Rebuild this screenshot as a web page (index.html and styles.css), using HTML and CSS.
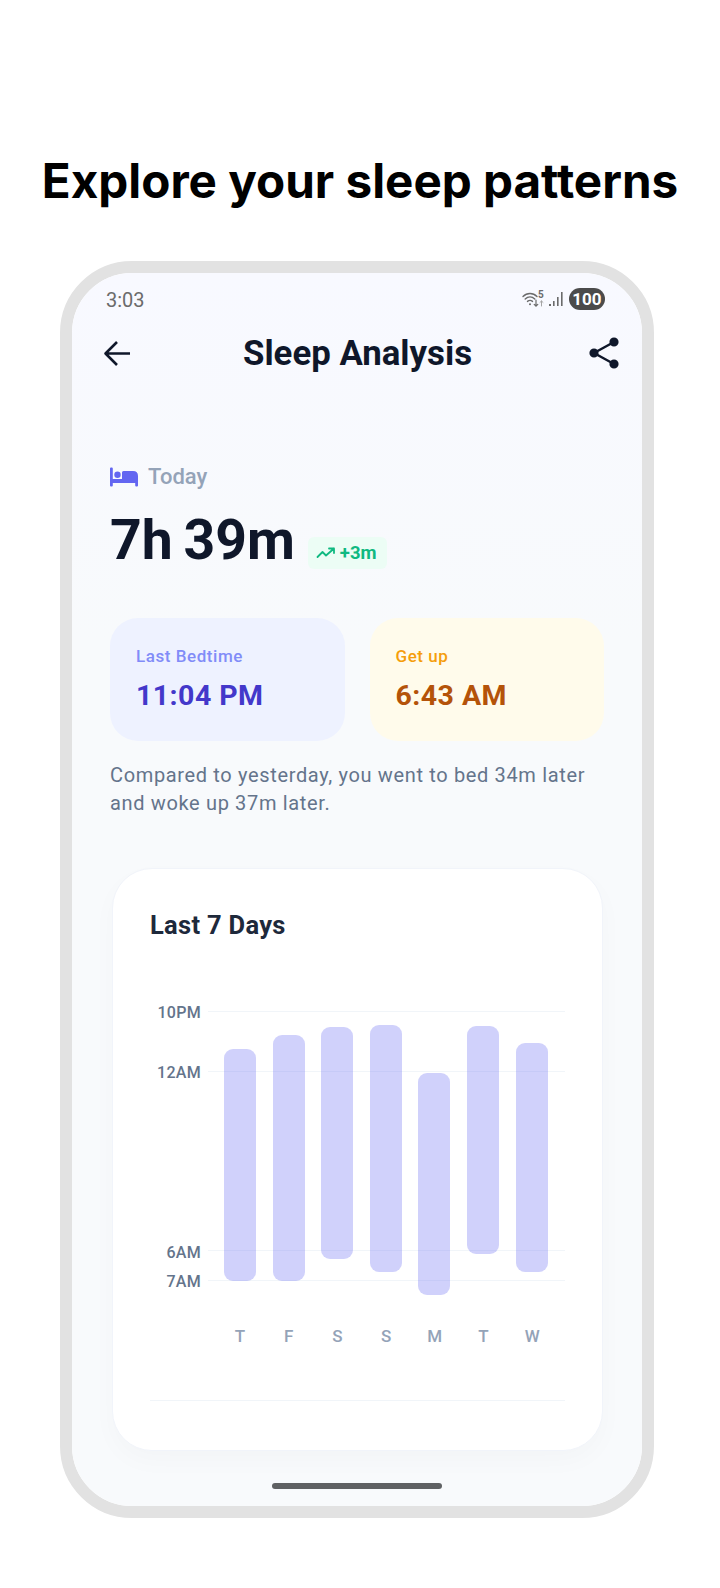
FILE: index.html
```html
<!DOCTYPE html>
<html>
<head>
<meta charset="UTF-8">
<title>Sleep Analysis</title>
<link rel="stylesheet" href="styles.css">
</head>
<body>
<h1 class="headline">Explore your sleep patterns</h1>
<div class="phone">
	<div class="screen">
		<div class="status">
			<span class="clock">3:03</span>
			<div class="status-icons">
				<svg width="24" height="18" viewBox="0 0 24 18" fill="none" stroke="#6b6b6b" stroke-width="1.4" stroke-linecap="round">
					<path d="M1 6.5C5 2.5 11 2.5 15 6.5"/>
					<path d="M3.2 9C6 6.4 10 6.4 12.8 9"/>
					<path d="M5.5 11.4C7 10.2 9 10.2 10.5 11.4"/>
					<path d="M8 14.2v.1" stroke-width="2"/>
					<path d="M14 10v6M12.2 14.4L14 16.2L15.8 14.4" stroke-width="1.2"/>
					<path d="M19.5 16v-5M18 12.4L19.5 11L21 12.4" stroke="#a5a5a5" stroke-width="1"/>
					<text x="16" y="8" class="wifi-five">5</text>
				</svg>
				<svg width="16" height="16" viewBox="0 0 16 16" fill="#6b6b6b">
					<rect x="0" y="13" width="2" height="2"/>
					<rect x="4" y="10" width="1.6" height="5"/>
					<rect x="8" y="6" width="1.6" height="9"/>
					<rect x="12" y="1" width="1.6" height="14"/>
				</svg>
				<span class="battery">100</span>
			</div>
		</div>
		<div class="nav">
			<svg width="32" height="32" viewBox="0 0 32 32" fill="none" stroke="#0f172a" stroke-width="2.6" stroke-linejoin="round">
				<path d="M29 16.500H5M16 5L4.500 16.500L16 28"/>
			</svg>
			<span class="nav-title">Sleep Analysis</span>
			<svg width="32" height="32" viewBox="0 0 32 32" fill="#0f172a" stroke="#0f172a" stroke-width="2.400">
				<path d="M25 5L5 16L25 27" fill="none"/>
				<circle cx="25" cy="5" r="3.400"/>
				<circle cx="5" cy="16" r="3.400"/>
				<circle cx="25" cy="27" r="3.400"/>
			</svg>
		</div>

		<div class="summary">
			<div class="today">
				<svg width="28" height="20" viewBox="0 0 28 20" fill="#6366f1">
					<path d="M0 1.500Q0 .500 1 .500H1.800Q2.800 .500 2.800 1.500V12H12V5.500Q12 4 13.500 4H23Q28 4 28 9V18.500Q28 19.500 27 19.500H26.200Q25.200 19.500 25.200 18.500V16H2.800V18.500Q2.800 19.500 1.800 19.500H1Q0 19.500 0 18.500Z"/>
					<circle cx="7.500" cy="7.800" r="3.200"/>
				</svg>
				<span>Today</span>
			</div>
			<div class="total">
				<span class="total-time">7h 39m</span>
				<span class="delta">
					<svg width="20" height="14" viewBox="0 0 20 14" fill="none" stroke="#10b981" stroke-width="1.800" stroke-linecap="round" stroke-linejoin="round">
						<path d="M1.500 11L6.500 6L10 9.500L18 2.500M13 2.500H18V7"/>
					</svg>
					+3m
				</span>
			</div>
		</div>

		<div class="times">
			<div class="time-card bed">
				<div class="time-label">Last Bedtime</div>
				<div class="time-value">11:04 PM</div>
			</div>
			<div class="time-card rise">
				<div class="time-label">Get up</div>
				<div class="time-value">6:43 AM</div>
			</div>
		</div>
		<p class="compare">Compared to yesterday, you went to bed 34m later and woke up 37m later.</p>

		<div class="chart-card">
			<h2 class="chart-title">Last 7 Days</h2>
			<div class="chart">
				<!-- chart canvas: top of .chart is y=960 in the page -->
				<div class="grid-line" style="top:51px"></div>
				<div class="grid-line" style="top:111px"></div>
				<div class="grid-line" style="top:290px"></div>
				<div class="grid-line" style="top:320px"></div>
				<span class="hour" style="top:44px">10PM</span>
				<span class="hour" style="top:104px">12AM</span>
				<span class="hour" style="top:284px">6AM</span>
				<span class="hour" style="top:313px">7AM</span>
				<div class="bar" style="left:74px;top:89px;height:232px"></div>
				<div class="bar" style="left:122.500px;top:75px;height:246px"></div>
				<div class="bar" style="left:171px;top:67px;height:232px"></div>
				<div class="bar" style="left:219.500px;top:64.500px;height:247.500px"></div>
				<div class="bar" style="left:268px;top:112.500px;height:222px"></div>
				<div class="bar" style="left:317px;top:66px;height:227.500px"></div>
				<div class="bar" style="left:366px;top:83px;height:229px"></div>
				<div class="days">
					<span>T</span><span>F</span><span>S</span><span>S</span><span>M</span><span>T</span><span>W</span>
				</div>
			</div>
			<div class="chart-rule"></div>
		</div>
		<div class="home-bar"></div>
	</div>
</div>
</body>
</html>
```
FILE: styles.css
```css
* {
	margin: 0;
	padding: 0;
	box-sizing: border-box;
}
body {
	width: 720px;
	height: 1588px;
	background: #fff;
	overflow: hidden;
	font-family: Roboto, "Liberation Sans", sans-serif;
}
.headline {
	padding-top: 150px;
	height: 261px;
	text-align: center;
	font: 700 47.600px/62px Inter, "Liberation Sans", sans-serif;
	color: #000;
}
.phone {
	width: 594px;
	height: 1257px;
	margin-left: 60px;
	border: 12px solid #e2e2e2;
	border-radius: 72px;
	overflow: hidden;
}
.screen {
	height: 100%;
	display: flex;
	flex-direction: column;
	background: linear-gradient(#f8f9ff, #f8fafc 30%);
}

/* status bar */
.status {
	height: 52px;
	padding: 12px 37px 0 34px;
	display: flex;
	justify-content: space-between;
	align-items: flex-start;
}
.clock {
	font: 400 20px/30px Roboto, sans-serif;
	color: #6b6b6b;
}
.status-icons {
	display: flex;
	align-items: center;
	gap: 3px;
	margin-top: 3px;
}
.wifi-five {
	font: 700 10px Roboto, sans-serif;
	fill: #6b6b6b;
	stroke: none;
}
.battery {
	width: 36px;
	height: 22px;
	margin-left: 1px;
	border-radius: 11px;
	background: #4b4b4b;
	color: #fff;
	font: 700 17px/22px Roboto, sans-serif;
	text-align: center;
}

/* header */
.nav {
	height: 56px;
	padding: 0 21px 0 29px;
	display: flex;
	align-items: center;
	justify-content: space-between;
}
.nav-title {
	margin-left: -7px;
	font: 700 34.800px/40px Roboto, sans-serif;
	color: #0f172a;
}

/* today block */
.summary {
	padding: 82px 38px 0;
}
.today {
	display: flex;
	align-items: center;
	gap: 10px;
	height: 28px;
	font: 500 22px/28px Roboto, sans-serif;
	color: #94a3b8;
}
.total {
	display: flex;
	align-items: flex-end;
	gap: 13px;
	margin-top: 18px;
}
.total-time {
	font: 700 55.300px/64px Roboto, sans-serif;
	word-spacing: -3px;
	color: #0f172a;
}
.delta {
	display: flex;
	align-items: center;
	gap: 4px;
	height: 32px;
	margin-bottom: 4px;
	padding: 0 10px 0 8px;
	border-radius: 6px;
	background: #ecfdf5;
	color: #10b981;
	font: 700 18.500px/32px Roboto, sans-serif;
}

/* bedtime cards */
.times {
	display: flex;
	gap: 25px;
	margin-top: 45px;
	padding: 0 38px;
}
.time-card {
	width: 235px;
	height: 123px;
	padding: 26px 26px 0;
	border-radius: 28px;
}
.time-label {
	font: 500 17px/24px Roboto, sans-serif;
	letter-spacing: .55px;
}
.time-value {
	margin-top: 10px;
	font: 700 28.500px/36px Roboto, sans-serif;
	letter-spacing: .45px;
}
.bed {
	background: #eef2ff;
}
.bed .time-label {
	color: #818cf8;
}
.bed .time-value {
	color: #4338ca;
}
.rise {
	background: #fffbeb;
}
.rise .time-label {
	color: #f59e0b;
}
.rise .time-value {
	color: #b45309;
}
.compare {
	margin-top: 20px;
	padding: 0 38px;
	font: 400 20px/28px Roboto, sans-serif;
	letter-spacing: .65px;
	color: #64748b;
}

/* chart */
.chart-card {
	width: 491px;
	height: 583px;
	margin: 51px 0 0 40px;
	padding: 39px 37px 0;
	border-radius: 40px;
	background: #fff;
	border: 1px solid #f1f4fa;
	box-shadow: 0 10px 26px rgba(15, 23, 42, .025);
}
.chart-title {
	font: 700 25.500px/34px Roboto, sans-serif;
	letter-spacing: .3px;
	color: #1e293b;
}
.chart {
	position: relative;
	height: 403px;
	margin: 18px 0 0;
}
.grid-line {
	position: absolute;
	left: 58px;
	right: 0;
	height: 1px;
	background: #f1f5f9;
}
.hour {
	position: absolute;
	right: 364px;
	font: 500 16px/18px Roboto, sans-serif;
	letter-spacing: .3px;
	color: #64748b;
}
.bar {
	position: absolute;
	width: 32px;
	border-radius: 9px;
	background: rgba(99, 102, 241, .3);
}
.days {
	position: absolute;
	left: 74px;
	top: 364px;
	display: flex;
	gap: 16.700px;
	font: 500 17px/24px Roboto, sans-serif;
	color: #94a3b8;
}
.days span {
	width: 32px;
	text-align: center;
}
.chart-rule {
	height: 1px;
	margin: 37px 0 0;
	background: #f1f5f9;
}
.home-bar {
	width: 170px;
	height: 6px;
	margin: 32px auto 0;
	border-radius: 3px;
	background: #5f6163;
}
```
